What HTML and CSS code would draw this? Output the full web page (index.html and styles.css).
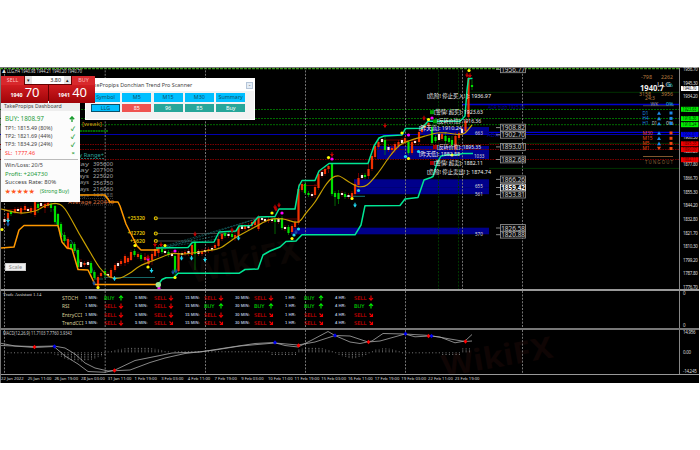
FILE: index.html
```
<!DOCTYPE html>
<html lang="en">
<head>
    <meta charset="UTF-8">
    <meta name="viewport" content="width=device-width, initial-scale=1.0">
    <title>LLG,H4</title>
    <link rel="stylesheet" href="styles.css">
</head>
<body>
    <main class="terminal">
        <section class="pane price-pane">
            <svg class="plot" id="price" viewBox="0 68 679 221"></svg>
            <div class="axis" id="priceAxis"></div>
            <svg class="tags" id="tags" viewBox="680 68 19 221"></svg>
        </section>
        <section class="pane assistant-pane">
            <svg class="plot backdrop" id="assistantLines" viewBox="0 291 679 37"></svg>
            <div class="assistant">
                <div class="assistant-title">Trade Assistant 1.14</div>
                <div class="signals" id="signals"></div>
            </div>
            <div class="axis"><span>0</span><span>0</span></div>
        </section>
        <section class="pane macd-pane">
            <svg class="plot" id="macd" viewBox="0 330 679 44"></svg>
            <div class="axis"><span>14.956</span><span>0.00</span><span>-14.245</span></div>
        </section>
        <footer class="timeline" id="timeline"></footer>

        <div class="window scanner">
            <div class="scanner-title"><span>TakePropips Donchian Trend Pro Scanner</span><i class="minimize">-</i></div>
            <div class="scanner-grid">
                <b>Symbol</b><b>M5</b><b>M15</b><b>M30</b><b>Summary</b>
                <b class="symbol">LLG</b><b class="down">85</b><b class="up">96</b><b class="up">85</b><b class="up">Buy</b>
            </div>
        </div>

        <div class="window dashboard">
            <div class="dashboard-title">TakePropips Dashboard</div>
            <div class="dashboard-body">
                <p class="big green"><span>BUY: 1808.97</span><svg class="arrow" viewBox="0 0 6 6"><path d="M3 6V1M.8 3.2L3 .8l2.200 2.400"/></svg></p>
                <p><span>TP1: 1815.49 (80%)</span><i>✓</i></p>
                <p><span>TP2: 1821.69 (44%)</span><i>✓</i></p>
                <p><span>TP3: 1834.29 (24%)</span><i>✓</i></p>
                <p class="red"><span>SL: &nbsp;1777.46</span><i>×</i></p>
                <hr>
                <p class="stat"><span>Win/Loss: 20/5</span></p>
                <p class="stat green wide"><span>Profit: +204730</span></p>
                <p class="stat wide"><span>Success Rate: 80%</span></p>
                <p class="stat"><span class="stars">★★★★★</span><span class="green strong">(Strong Buy)</span></p>
            </div>
        </div>

        <div class="window trade">
            <div class="trade-top">
                <b>SELL</b>
                <div class="volume"><i>▾</i><span>3.80</span><i>▴</i></div>
                <b>BUY</b>
            </div>
            <div class="trade-prices">
                <div><small>1940</small>70</div>
                <div><small>1941</small>40</div>
            </div>
        </div>

        <button class="scale">Scale</button>
    </main>
    <script src="chart.js"></script>
</body>
</html>
```
FILE: styles.css
```
* {
    box-sizing: border-box;
}

body {
    margin: 0;
    padding-top: 67px;
    background-color: white;
    font-family: "Noto Sans", "Noto Sans CJK SC", sans-serif;
    overflow: hidden;
}

.terminal {
    position: relative;
    width: 699px;
    height: 316px;
    background-color: black;
    color: #ddd;
    border-left: 1px solid #777;
    border-top: 1px solid #777;
    display: flex;
    flex-direction: column;
}

.pane {
    position: relative;
    display: flex;
    border-bottom: 1px solid #999;
}

.price-pane {
    height: 223px;
    border-bottom: 2px solid #999;
}

.assistant-pane {
    height: 39px;
    border-bottom: 2px solid #777;
}

.macd-pane {
    height: 45px;
}

.plot {
    display: block;
    width: 680px;
    height: 100%;
    margin-left: -1px;
    flex: none;
    border-right: 1px solid #888;
}

.backdrop, .tags {
    position: absolute;
    left: 0;
    top: 0;
}

.tags {
    left: 679px;
    width: 19px;
    height: 221px;
}

svg text {
    font-family: "Noto Sans", "Noto Sans CJK SC", sans-serif;
}

.axis {
    width: 19px;
    padding-left: 3px;
    display: flex;
    flex-direction: column;
    justify-content: space-between;
    font-size: 4.5px;
    line-height: 5px;
    letter-spacing: -0.3px;
}

.price-pane .axis {
    margin: -1px 0;
}

.assistant {
    width: 679px;
    position: relative;
}

.assistant-title {
    height: 0;
    padding: 1px 2px;
    font-family: "Liberation Serif", serif;
    font-size: 4.700px;
    line-height: 6px;
}

.signals {
    display: grid;
    grid-template-columns: 23px repeat(6, 50px);
    grid-auto-rows: 8.300px;
    padding: 1px 0 0 61px;
    font-family: "Liberation Sans", sans-serif;
    font-size: 4.200px;
    font-weight: bold;
    line-height: 8.300px;
    color: #a9b8cc;
    white-space: nowrap;
}

.signals .name {
    font-family: "Noto Sans", sans-serif;
    font-size: 5px;
    color: #d8cf98;
    font-weight: normal;
}

.signal {
    display: grid;
    grid-template-columns: 19px 14px 6px;
    align-items: start;
}

.signal .sell, .signal .buy {
    font-family: "DejaVu Sans", sans-serif;
    font-size: 5.200px;
    font-weight: normal;
}

.signal svg {
    width: 6px;
    height: 6px;
    margin-top: 1px;
    fill: none;
    stroke-width: 1.1;
}

.signal .sell {
    color: #e00000;
    stroke: #f00000;
}

.signal .buy {
    color: #00e000;
    stroke: #00f000;
}

.timeline {
    display: grid;
    grid-template-columns: repeat(18, 26.700px);
    font-size: 4.200px;
    line-height: 7px;
    white-space: nowrap;
}

/* floating windows */
.window {
    position: absolute;
    color: #444;
}

.scanner {
    left: 84px;
    top: 10px;
    width: 170px;
    height: 42px;
    background-color: #f3f3f3;
    border: 1px solid #fff;
}

.scanner-title {
    height: 12px;
    display: flex;
    justify-content: space-between;
    align-items: center;
    background-color: #fff;
    font-size: 5.400px;
    padding: 0 1px 0 2px;
}

.minimize {
    width: 7px;
    height: 7px;
    border: 1px solid #b5c5d8;
    background-color: #e4edf7;
    line-height: 4px;
    text-align: center;
}

.scanner-grid {
    display: grid;
    grid-template-columns: repeat(5, 29px);
    grid-auto-rows: 8.500px;
    gap: 2px 2.300px;
    padding: 2px 5px;
}

.scanner-grid b {
    background-color: #00bfff;
    color: #0c4f68;
    font-size: 5.400px;
    font-weight: normal;
    line-height: 8.500px;
    text-align: center;
}

.scanner-grid .symbol {
    outline: 1px solid #08516c;
    outline-offset: -1px;
}

.scanner-grid .down {
    background-color: #ef5350;
    color: #fff;
}

.scanner-grid .up {
    background-color: #26a69a;
    color: #fff;
}

.dashboard {
    left: 0;
    top: 33px;
    width: 79px;
    height: 101px;
    background-color: #fcfcfc;
}

.dashboard-title {
    height: 10px;
    padding-left: 3px;
    background-color: #eee;
    font-size: 5.200px;
    line-height: 11px;
}

.dashboard-body {
    padding: 2px 2px 0 4px;
    font-size: 5.400px;
}

.dashboard p {
    margin: 0;
    height: 8.200px;
    padding-right: 3px;
    display: flex;
    justify-content: space-between;
    align-items: center;
    white-space: nowrap;
}

.dashboard p.big {
    height: 11px;
    font-size: 6.300px;
}

.dashboard p.stat {
    height: 8.600px;
    font-size: 5.500px;
}

.dashboard p.wide {
    font-size: 6px;
}

.dashboard i {
    color: #2e9e3c;
    font-size: 6px;
    font-style: normal;
    font-weight: bold;
}

.dashboard hr {
    margin: 2px 0 1px -1px;
    border: 0;
    border-top: 1px solid #bbb;
}

.dashboard .green {
    color: #229a3a;
}

.dashboard .red {
    color: #ff3030;
}

.dashboard .stars {
    color: #ff5722;
    letter-spacing: 0.500px;
}

.dashboard .strong {
    font-size: 5px;
    margin-right: 6px;
}

.arrow {
    width: 6px;
    height: 6px;
    fill: none;
    stroke: #169b2c;
    stroke-width: 1.300;
}

.trade {
    left: 0;
    top: 8px;
    width: 94px;
    height: 25px;
    color: #fff;
    background-color: #600;
}

.trade-top {
    height: 9px;
    display: flex;
}

.trade-top b {
    width: 23px;
    background-color: #d8282c;
    color: #ffc0c0;
    font-size: 5.300px;
    font-weight: normal;
    line-height: 9px;
    text-align: center;
}

.volume {
    flex: 1;
    display: flex;
    height: 8px;
    margin: 0 1px;
    background-color: #fff;
    color: #222;
    font-size: 5.400px;
    line-height: 8px;
}

.volume i {
    width: 7px;
    background-color: #e5e5e5;
    font-style: normal;
    text-align: center;
}

.volume span {
    flex: 1;
    text-align: right;
    padding-right: 3px;
}

.trade-prices {
    display: grid;
    grid-template-columns: 1fr 1fr;
    gap: 1px;
    height: 16px;
}

.trade-prices div {
    background: linear-gradient(#d01c20, #a00408);
    font-size: 13px;
    line-height: 15px;
    text-align: right;
    padding-right: 8px;
    white-space: nowrap;
}

.trade-prices small {
    font-size: 5.300px;
    font-weight: bold;
    margin-right: 2px;
}

.scale {
    position: absolute;
    left: 4px;
    top: 195px;
    width: 21px;
    height: 8px;
    padding: 0;
    border: 1px solid #ccc;
    background-color: #f0f0f0;
    color: #888;
    font: 5.500px/6px "Noto Sans", sans-serif;
}
```
FILE: chart.js
```
const NS = 'http://www.w3.org/2000/svg';
const price = document.getElementById('price');
const macd = document.getElementById('macd');
const tags = document.getElementById('tags');

function add(parent, name, attrs, text) {
    const el = document.createElementNS(NS, name);
    for (const key in attrs) el.setAttribute(key, attrs[key]);
    if (text) el.textContent = text;
    parent.appendChild(el);
    return el;
}

function line(parent, x1, y1, x2, y2, stroke, width = 1, dash = '') {
    add(parent, 'line', { x1, y1, x2, y2, stroke, 'stroke-width': width, 'stroke-dasharray': dash });
}

function rect(parent, x, y, width, height, fill) {
    add(parent, 'rect', { x, y, width, height, fill });
}

// y is the vertical middle of the text, w its drawn width
function label(parent, x, y, w, size, fill, text, more = {}) {
    add(parent, 'text', { x, y: y + size * 0.36, 'font-size': size, fill, textLength: w, lengthAdjust: 'spacingAndGlyphs', ...more }, text);
}

function path(parent, points, stroke, width) {
    add(parent, 'polyline', { points, fill: 'none', stroke, 'stroke-width': width, 'stroke-linejoin': 'round' });
}

function curve(parent, points, stroke, width) {
    const p = points.split(' ').map(s => s.split(',').map(Number));
    let d = `M${p[0]}`;
    for (let i = 0; i < p.length - 1; i++) {
        const a = p[i - 1] || p[i], b = p[i], c = p[i + 1], e = p[i + 2] || c;
        d += `C${b[0] + (c[0] - a[0]) / 6},${b[1] + (c[1] - a[1]) / 6} ${c[0] - (e[0] - b[0]) / 6},${c[1] - (e[1] - b[1]) / 6} ${c}`;
    }
    add(parent, 'path', { d, fill: 'none', stroke, 'stroke-width': width });
}

// background mark
label(price, 190, 272, 112, 32, '#0b0604', 'WikiFX', { 'font-weight': 'bold', transform: 'rotate(-12 190 272)' });
label(macd, 442, 366, 112, 30, '#0f0504', 'WikiFX', { 'font-weight': 'bold', transform: 'rotate(-10 442 366)' });

// supply and demand zones
[[420, 127, 7.5], [377, 146, 13], [354, 179.3, 14.9], [291, 227.7, 6.6]].forEach(([x, y, h]) => rect(price, x, y, 489 - x, h, '#00008b'));
line(price, 354, 187.5, 489, 187.5, '#00006a', 0.6);

// levels
line(price, 0, 68.7, 680, 68.7, '#3c9c1c', 1.2, '3 1');
line(price, 470, 92.3, 680, 92.3, '#003c00', 0.8);
line(price, 462, 104.5, 680, 104.5, '#0000d0', 1.4);
[109.5, 118.5, 124.7].forEach(y => line(price, 0, y, 680, y, '#006a00', 1, '2 1'));
line(price, 80, 131, 108, 131, '#008c00', 1.4, '2 .6');
line(price, 0, 134.5, 680, 134.5, '#0000b0', 1);
line(price, 489, 132.4, 680, 132.4, '#0000d8', 1.2);
line(price, 489, 143.4, 680, 143.4, '#003800', 0.8);
[144.5, 149.5, 159.5].forEach(y => line(price, 0, y, 680, y, '#780000', 1, '1.5 1'));
line(price, 489, 168.4, 680, 168.4, '#004000', 0.8);

// day separators
const days = [4.5, 105.2, 205.5, 305.5, 405.5, 522.5];
const assistantLines = document.getElementById('assistantLines');
days.forEach(x => {
    line(price, x, 67, x, 290, '#808080', 0.9, '2 1.4');
    line(assistantLines, x, 291, x, 328, '#808080', 0.9, '2 1.4');
    line(macd, x, 330, x, 374, '#808080', 0.9, '2 1.4');
});
line(price, 462.5, 67, 462.5, 290, '#808080', 0.9, '2 1.4');
line(price, 438.5, 67, 438.5, 290, '#003800', 1, '2 1.4');
line(price, 458.5, 67, 458.5, 290, '#003800', 1, '2 1.4');

label(price, 2, 71.3, 80, 4.8, '#ddd', '▲ LLG,H4  1940.98 1944.21 1940.20 1940.70');

// range table
label(price, 82, 124, 20, 6, '#c89010', '[weak]');
label(price, 69, 154.5, 35, 6, '#2aa198', 'Daily Range+');
line(price, 60, 158.5, 105, 158.5, '#2aa198', 0.7, '2 1');
[['today', 395600], ['1 day', 207100], ['5 days', 225020], ['10 days', 256750], ['20 days', 216060], ['50 days', 197288]].forEach(([name, value], i) => {
    label(price, 68, 164 + i * 6.2, 21, 5.2, i === 5 ? '#555' : '#999', name);
    label(price, 93, 164 + i * 6.2, 20, 5.4, i === 5 ? '#666' : '#aaa', String(value));
});
label(price, 68, 201.7, 46, 5.4, '#d07040', 'Average  220440');
line(price, 80, 198.5, 114, 198.5, '#555', 0.6, '1 1');
line(price, 80, 205, 114, 205, '#555', 0.6, '1 1');

// profit levels
[['+25320', 127.5, 218.2, 260], ['+12720', 127.5, 233.5, 225], ['+5620', 130, 241, 192]].forEach(([text, x, y, end]) => {
    line(price, 156, y, end, y, '#666', 0.7);
    label(price, x, y, 145 - x, 5.4, '#e8c800', text, { 'font-weight': '600' });
    add(price, 'circle', { cx: 155.8, cy: y, r: 1.5, fill: '#3a3000', stroke: '#e0c000', 'stroke-width': 1.1 });
});
[[158, 248, 256, 219], [158, 248, 235, 232], [160, 248, 218, 239], [165, 248, 256, 219]].forEach(p => line(price, ...p, '#187878', 0.6, '2 1'));
line(price, 104, 277.5, 155, 277.5, '#1a8080', 0.8);
line(price, 344, 196.3, 365, 196.3, '#1a9c9c', 0.8);
path(price, '54,209 56,222 61,232 68,242 71,240 76,250 80,263 91,264 95,279 103,279', '#1a8080', 0.7);
path(price, '4,210 34,209 50,202', '#900000', 0.7);
path(price, '303,185.5 317,185.5 319,172 330,168', '#900000', 0.7);
path(price, '382,140 402,140 417,141', '#900000', 0.7);
path(price, '275,219 297,219', '#900000', 0.7);

// candles: x, body top, body bottom, colour, high, low
const candles = `
4.5 219 222 w;8 213 220 r;11 212 214 g;15 209 212 r;18 209 211 w;21 208 213 r;25 206 210 r 204 213;28 209 211 w;31 208 212 r;35 201 215 r;
38 204 208 g 202 213;41 203 206 w;45 204 208 r 202 213;48 203 206 r;51 204 208 g 202 212;55 206 222 g;58 214 225 g 213 228;61 224 237 g;64.5 235 241 g 232 244;68 239 248 r;71 244 248 g;
74.5 244 251 g;78 250 267 g;81 262 267 w 259 268;84.5 263 265 r;88 262 265 w;91 263 273 g 261 276;94.5 272 278 g;98 277 287 r;101 273 276 r;
105 271 275 g 269 278;108 274 276 w;111 270 277 r;115 265 270 r;118 263 266 w;121 261 264 r;125 256 263 r 254 266;128 258 262 r;131 252 260 r 250 261;134.500 251 255 g;
138 254 257 r;141 255 259 g;145 257 260 r 253 263;148.500 260 264 r;152 254 260 r 251 265;155 249 256 r;158.500 248 253 r 245 257;162 249 252 g;165 251 253 w;168.500 252 255 g;
172 253 256 w;175 256 272 g 253 277;178.500 253 271 r;182 253 255 w;185 252 254 r;188.500 251 254 w;192 245 255 r;195 243 254 g 240 270;198.500 251 254 w;202 251 254 r;
205 250 252 w;208.500 249 251 r;212 248 250 w;215 245 248 r;218.500 239 246 r 236 248;222 234 239 r;225 233 236 g;228.500 234 236 w;232 234 237 g;235 235 238 r 231 241;
238.500 227 236 r;242 225 229 w;245 226 229 r;248.500 225 228 w;252 222 226 r;255 220 225 r;258.500 217 229 r;262 218 220 w;265 219 221 w;268.500 219 221 r;
272 219 221 w;275 219 222 g 217 234;278.500 219 222 w;282 218 228 g;285 227 229 w;288.500 227 233 g;292 226 232 r;295 222 227 r;298.500 189 223 r 184 225;302 184 190 r;
305 184 193 g 182 195;308.500 193 195 g;312 194 196 w;315 187 195 r 184 198;318.500 174 188 r;322 172 176 w;325 169 174 r;328.500 166 169 r 165 173;332 164 194 g 163 196;335 193 197 g 191 206;
338.500 193 199 g 190 204;342 193 195 w 191 197;345 194 197 g;348.500 195 197 w;352 193 198 r;355 184 194 r;358.500 178 185 r 173 188;362 175 178 w;365 175 177 g;368.500 169 176 r 164 179;
372 156 169 r;375 146 157 r;378.500 142 147 r;382 139 142 w;385 140 150 g 135 155;388.500 147 150 w;392 148 150 r 145 155;395 144 150 r 142 153;398.500 142 146 r;402 140 143 w;
405 138 142 r;408.500 142 153 g;412 142 153 r;415 141 143 w;419 132 142 r 129 144;422 127 132 r;425 124 128 r;428.500 123 126 r 121 129;432 127 143 g;435.500 137 141 g;439 134 140 w;
442 134 139 r;445.500 136 141 g 132 144;449 138 142 g;452 140 145 g 136 150;455.500 136 149 r 132 152;459 133 138 r;462 129 133 w;465.500 121 131 r;468.500 78 117 r 75 121;472 85 87 g 80 90`;
const colours = { r: '#f03000', g: '#00e000', w: '#ffe8e0' };
candles.split(';').forEach(row => {
    const [x, top, bottom, c, high, low] = row.trim().split(' ');
    const t = +top, b = +bottom;
    line(price, x, high || t - 2, x, low || b + 2, c === 'g' ? '#009000' : '#900000', 0.7);
    rect(price, x - 1.1, t, 2.2, b - t, colours[c]);
});

// Donchian channel and average
path(price, '79,195 105,195 110,202 118,202 120,206 126,224 133,238 137,246 141,250 158,250', '#ff9800', 1.5);
path(price, '1,248 14,247 19,230 24,225.5 58,225.5 62,242 67,248 72,249 78,269.500 88,270 95,284.500 158,284.500', '#ff9800', 1.5);
path(price, '156,248 188,247.5 192.500,242.300 214,242 219,232 236,231 239,226 251,225.500 258,217 275,216.500 279,209 295,209 299,186 302,180.500 315,180.500 319,171 329,163.500 368,163.500 374,146 379,138 384,136 402,135 405.500,128.400 422,128.200 428,121.300 460,121.300 465,116 467,90 468.500,78.500 472.500,78.500', '#00e695', 1.5);
path(price, '158,285 162,279.500 166,277.700 174,277.500 178,273.300 239,273.300 245,269.500 258,269 263,255 270,251 280,247 286,241.500 296,241 302,234.800 355,234.800 361,225 365,205.700 400,205.500 405,199 418,197.500 424,180 431,177.500 433,176.500 437,163 441,156 449,154.500 456,155 463,153.600 473,153.500', '#00e695', 1.5);
curve(price, '1,209 20,213 35,211 45,206 56,203.500 65,209 80,235 90,252 100,268 110,277 120,278 130,273 140,266 157,259 172,253.500 184,254 205,251 220,248 235,238 255,227 270,219.500 283,219 298,222 306,213 315,202 325,186 332,178 339,176 349,182 358,186.500 367,185 378,173 390,156 400,145 410,140.500 425,136 437,133 447,133 458,134.500 465,133 472,125', '#c8a000', 1.2);

// signal marks: dots and small crossed arrows
function dots(fill, list) {
    list.forEach(([cx, cy]) => add(price, 'circle', { cx, cy, r: 1.6, fill }));
}
function marks(stroke, list) {
    list.forEach(([x, y]) => add(price, 'path', { d: `M${x} ${y - 2.3}v4.600M${x - 1.7} ${y}h3.400M${x - 1} ${y + 1}h2`, stroke, 'stroke-width': 1.1 }));
}
dots('#ffff00', [[2, 229.500], [98, 287.500], [135, 245.500], [148, 267], [165, 245.500], [175, 277.500], [272, 213], [292, 238.500], [328.500, 157.500], [352, 198.500], [402, 133], [408.500, 158.500], [428.500, 119.500], [452, 155], [469, 70.500]]);
dots('#ff00ff', [[175, 251], [282, 213], [332, 159], [408.500, 135], [148, 259], [159, 288], [432, 118]]);
dots('#20d8f0', [[298.500, 229], [294, 235], [358.500, 190.500], [405.500, 156.500], [418.500, 151.500]]);
marks('#20d8f0', [[8, 220.500], [114.500, 278.500], [151.500, 270.500], [181.500, 258], [191.500, 258], [205, 259.500], [238.500, 238], [355, 205]]);
marks('#1850a0', [[8, 224], [94, 283], [173, 272], [176, 271], [296, 232]]);
marks('#c00000', [[148, 257], [195, 234], [232, 230], [275, 207], [279, 205], [276, 209], [332, 154.500], [385, 125.500], [424, 118], [467, 75], [470, 75.500], [155, 244.500], [161, 244.500]]);
add(price, 'circle', { cx: 158.3, cy: 284.7, r: 2.7, fill: '#a0e890' });

// centre captions
[
    [427, 96, 64, '[危险! 停止买入! ]: 1936.97', 0],
    [434, 112.2, 49, '[警情! 超买]: 1923.63', '#00a000'],
    [437, 121.3, 44, '[反转价位]: 1916.36', '#00a000'],
    [419, 128.500, 43, '[昨天高]: 1910.24', 0],
    [437, 147, 44, '[反转价位]: 1895.35', '#a00000'],
    [419, 154, 41, '[昨天低]: 1882.88', 0],
    [434, 163, 49, '[警情! 超卖]: 1882.11', '#a00000'],
    [427, 172, 64, '[危险! 停止卖出! ]: 1874.74', 0]
].forEach(([x, y, w, text, mark]) => {
    if (mark) rect(price, x - 4, y - 2, 4, 4, mark);
    label(price, x, y, w, 5.3, '#f0f0f0', text);
});
[['663', 475, 133.500], ['1033', 474, 156], ['655', 475, 186.300], ['561', 475, 193.900], ['570', 475, 234]].forEach(([t, x, y]) => label(price, x, y, t.length * 2.600, 4.700, '#ddd', t));
label(price, 488, 107.800, 37, 4.700, '#000090', 'ADR high 1925.84');
label(price, 487, 135.500, 12, 4.700, '#000090', 'ADR');

// level boxes
[[1956.77, 69.300], [1908.82, 127.600], [1902.70, 134.800], [1893.01, 146.900], [1882.68, 159.500], [1866.26, 179.400], [1859.42, 187.500], [1853.81, 194.600], [1826.58, 228], [1820.88, 234.700]].forEach(([v, y]) => {
    const main = v === 1859.42;
    line(price, 496, y, 500, y, '#aaa', 0.8);
    add(price, 'rect', { x: 500.500, y: y - 3.4, width: 25, height: 6.800, fill: '#0c0c0c', stroke: main ? '#fff' : '#999', 'stroke-width': 0.8 });
    label(price, 501.200, y, 23.800, 7, main ? '#fff' : '#ccc', v.toFixed(2), main ? { 'font-weight': 'bold' } : {});
});

// market summary
const brown = '#b87c40';
label(price, 641, 76.700, 11, 5.400, brown, '-798');
label(price, 661, 76.700, 12, 5.400, brown, '2262');
label(price, 657, 84.300, 14, 7, '#bbb', 'LLG');
label(price, 667, 85.500, 6, 5, '#20b8c8', '%');
label(price, 640, 88.500, 24, 8, '#eee', '1940.7', { 'font-weight': 'bold' });
label(price, 639, 93.900, 12, 5.400, brown, '3158');
label(price, 661, 93.900, 12, 5.400, brown, '3956');
label(price, 645, 98.200, 10, 5.400, brown, '24:3');
label(price, 650.500, 104, 8, 5, '#999', 'WK');
label(price, 666, 104, 7.500, 5, '#20c8d8', '0%');
line(price, 643, 105.700, 674, 105.700, '#666', 0.6);
label(price, 652, 123.300, 5, 5, '#ccc', 'D1');
label(price, 666, 123.300, 7.500, 5, '#ccc', '0%');
[['D1', 113, 6], ['H4', 118.400, 6], ['H1', 123.500, 6], ['M30', 133, 10], ['M15', 138.300, 10], ['M5', 143.400, 7], ['M1', 148.500, 7]].forEach(([t, y, w], i) => {
    const c = i < 3 ? '#1e88e8' : '#f04810';
    label(price, 642.500, y, w, 5.200, c, t);
    add(price, 'path', { d: i === 6 ? `M657 ${y - 1.800}h4l-2 3.600z` : `M657 ${y + 1.800}h4l-2 -3.600z`, fill: i === 6 ? '#f04810' : '#1e88e8' });
    rect(price, 669.500, y - 1.500, 3, 3, c);
});
line(price, 643, 156.500, 673, 156.500, brown, 0.7);
label(price, 645, 162.700, 28, 4.600, '#906438', 'T U N G O U T');

// price axis
const axis = document.getElementById('priceAxis');
[1956.7, 1945.3, 1934.2, 1922.8, 1911.7, 1900.3, 1889.2, 1877.8, 1866.7, 1855.3, 1844.2, 1832.8, 1821.7, 1810.3, 1799.2, 1787.8, 1776.7].forEach(v => {
    const span = document.createElement('span');
    span.textContent = v.toFixed(2);
    axis.appendChild(span);
});
[['1940.70', 88.500, '#fff', '#000'], ['1923.63', 109.300, '#00f000', '#003000'], ['1916.36', 118.600, '#00f000', '#003000'], ['1910.24', 124.700, '#00f000', '#003000'],
    ['1902.81', 134.400, '#0000f0', '#000060'], ['1895.35', 143.800, '#f00000', '#500000'], ['1890.07', 149.600, '#f00000', '#500000'], ['1882.11', 159.700, '#f00000', '#500000']].forEach(([t, y, bg, fg]) => {
    rect(tags, 681, y - 2.500, 17.500, 5, bg);
    label(tags, 682.500, y, 14, 4.400, fg, t);
});

// trade assistant: + buy, - sell, \ sell weakening
const arrows = {
    '+': 'M3 5.500V1M1 3l2-2.200L5 3',
    '-': 'M3 .5V5M1 3l2 2.200L5 3',
    '\\': 'M1.500 1.500l3 3M1.800 4.500h2.700V1.800'
};
const periods = ['1 MIN:', '5 MIN:', '15 MIN:', '30 MIN:', '1 HR:', '4 HR:'];
const signals = document.getElementById('signals');
[['STOCH', '+---+-'], ['RSI', '--++++'], ['EntryCCI', '---\\\\\\'], ['TrendCCI', '-\\\\\\\\\\']].forEach(([name, row]) => {
    signals.insertAdjacentHTML('beforeend', `<span class="name">${name}</span>`);
    periods.forEach((period, i) => {
        const side = row[i] === '+' ? 'buy' : 'sell';
        signals.insertAdjacentHTML('beforeend', `<div class="signal"><span>${period}</span><span class="${side}">${side.toUpperCase()}</span><svg class="${side}" viewBox="0 0 6 6"><path d="${arrows[row[i]]}"/></svg></div>`);
    });
});

// MACD
for (let i = 0; i < 140; i++) {
    const x = 4.5 + i * 3.345;
    const h = x < 54 ? 1 : x < 108 ? 9 * Math.sin((x - 50) / 60 * Math.PI) : x < 172 ? -5 * Math.sin((x - 105) / 67 * Math.PI) : x < 270 ? -1 : x < 296 ? 3 : x < 334 ? -5 * Math.sin((x - 290) / 46 * Math.PI) : x < 371 ? 6 * Math.sin((x - 334) / 37 * Math.PI) : x < 400 ? -4 * Math.sin((x - 368) / 34 * Math.PI) : x < 440 ? 1 : x < 462 ? 3 : -4;
    line(macd, x, 352.300, x, 352.300 + (h || 1), '#999', 0.8, '1 .7');
}
label(macd, 3, 333, 69, 4.800, '#ccc', 'MACD(12,26,9) 11.7103 7.7760 3.9343');
path(macd, '1,345.500 15,346 34,347.500 54,346.500 65,356 78,364 88,371.500 105,372.300 115,370 135,360.500 160,355.500 172,353 200,352 225,348 255,343.500 274,342.500 285,345.500 298,347 312,340 328,331.500 335,335.500 350,342 360,343.500 372,341 383,333.500 405,334 415,336.800 430,336 440,337 455,342.800 465,341 472,334.500', '#aaa', 0.8);
path(macd, '1,343.300 15,346 34,346.500 54,346 65,348 75,354 85,363 95,368 108,371 130,370 150,362.500 165,358 185,353.500 215,350 240,346 275,343 298,345 315,342 335,335.500 350,336 368,342 380,341 405,334 430,335.500 450,339 465,341.500 472,341', '#aaa', 0.8);
[['#f00', [[34.500, 347], [114.500, 370.500], [298.500, 345.500], [368.500, 342], [428.500, 336], [465.500, 341.500]]], ['#0000f0', [[54.500, 346.500], [275, 342.500], [335, 335.500], [405.500, 333.800], [431.500, 336]]]].forEach(([fill, list]) => {
    list.forEach(([x, y]) => add(macd, 'path', { d: `M${x} ${y - 2.300}l1.900 2.300l-1.900 2.300l-1.900-2.300z`, fill }));
});

// time labels
const timeline = document.getElementById('timeline');
['22 Jan 2022', '25 Jan 11:00', '26 Jan 19:00', '28 Jan 03:00', '31 Jan 11:00', '1 Feb 19:00', '3 Feb 03:00', '4 Feb 11:00', '7 Feb 19:00', '9 Feb 03:00', '10 Feb 11:00', '11 Feb 19:00', '15 Feb 03:00', '16 Feb 11:00', '17 Feb 19:00', '19 Feb 03:00', '22 Feb 11:00', '23 Feb 19:00'].forEach(t => {
    const span = document.createElement('span');
    span.textContent = t;
    timeline.appendChild(span);
});
```
